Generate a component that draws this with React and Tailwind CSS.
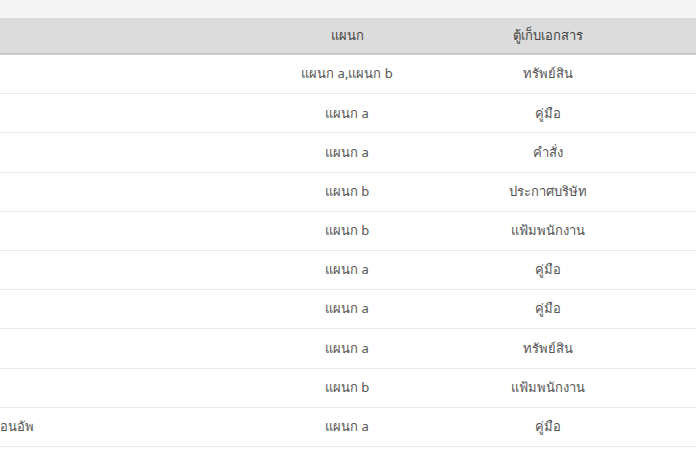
import React from 'react';

const rows = [
  { name: '', dept: 'แผนก a,แผนก b', cabinet: 'ทรัพย์สิน' },
  { name: '', dept: 'แผนก a', cabinet: 'คู่มือ' },
  { name: '', dept: 'แผนก a', cabinet: 'คำสั่ง' },
  { name: '', dept: 'แผนก b', cabinet: 'ประกาศบริษัท' },
  { name: '', dept: 'แผนก b', cabinet: 'แฟ้มพนักงาน' },
  { name: '', dept: 'แผนก a', cabinet: 'คู่มือ' },
  { name: '', dept: 'แผนก a', cabinet: 'คู่มือ' },
  { name: '', dept: 'แผนก a', cabinet: 'ทรัพย์สิน' },
  { name: '', dept: 'แผนก b', cabinet: 'แฟ้มพนักงาน' },
  { name: 'อนอัพ', dept: 'แผนก a', cabinet: 'คู่มือ' },
];

export default function App() {
  return (
    <div className="w-[696px] h-[464px] bg-white overflow-hidden text-[13px] text-[#555]" style={{ fontFamily: '"Noto Sans", "DejaVu Sans", sans-serif' }}>
      <div className="h-[18px] bg-[#f5f5f5]" />
      <div className="grid grid-cols-[246px_202px_200px_1fr] h-[37px] items-center bg-[#dcdcdc] border-b-2 border-[#c9c9c9] text-[#444]">
        <div />
        <div className="text-center">แผนก</div>
        <div className="text-center">ตู้เก็บเอกสาร</div>
        <div />
      </div>
      {rows.map((r, i) => (
        <div
          key={i}
          className="grid grid-cols-[246px_202px_200px_1fr] h-[39.2px] items-center border-b border-[#e8e8e8]"
        >
          <div className="whitespace-nowrap">{r.name}</div>
          <div className="text-center">{r.dept}</div>
          <div className="text-center">{r.cabinet}</div>
          <div />
        </div>
      ))}
    </div>
  );
}
